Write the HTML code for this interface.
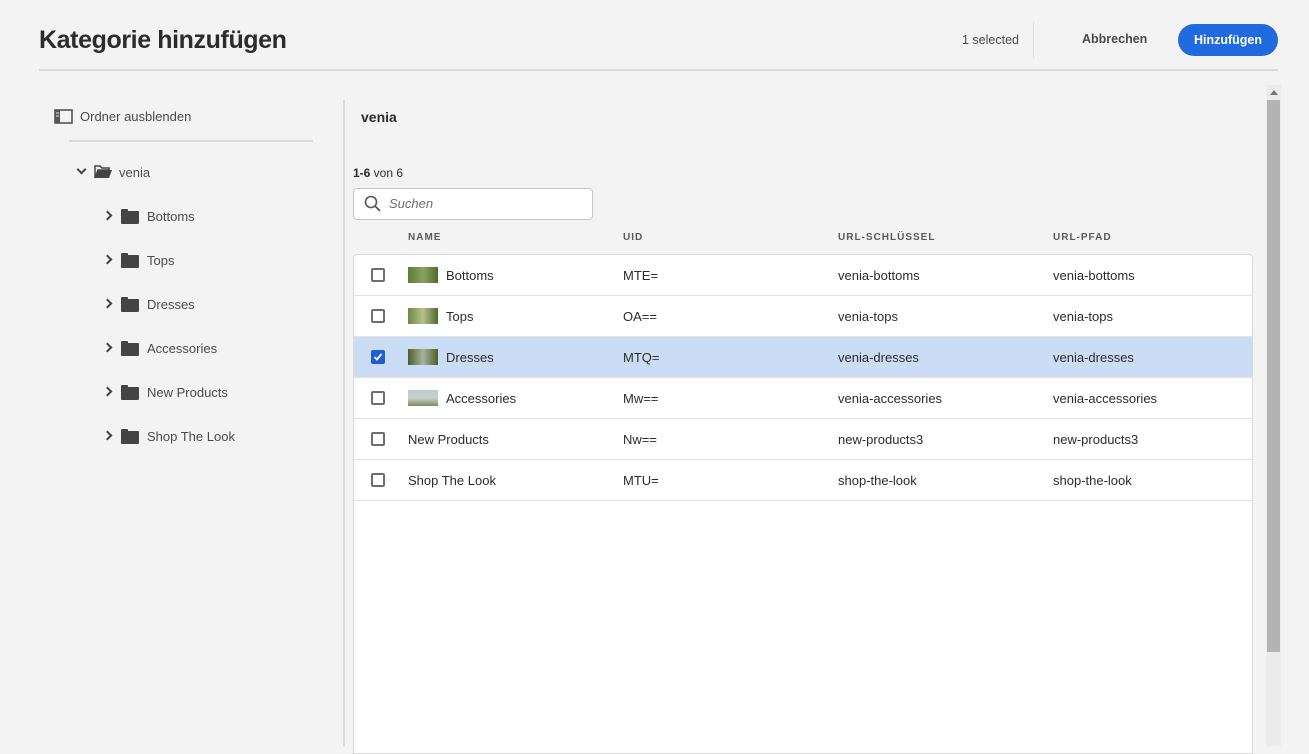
<!DOCTYPE html>
<html><head><meta charset="utf-8"><style>
*{box-sizing:border-box;margin:0;padding:0}
body{width:1309px;height:746px;overflow:hidden;background:#f3f3f3;font-family:"Liberation Sans",sans-serif;color:#2c2c2c;position:relative}
.abs{position:absolute}
h1{position:absolute;left:39px;top:26px;font-size:25px;font-weight:bold;color:#2c2c2c;letter-spacing:-0.4px}
.hr{position:absolute;left:39px;top:69px;width:1239px;height:2px;background:#dadada}
.sel{left:962px;top:33px;font-size:12.5px;color:#4b4b4b}
.vsep{left:1033px;top:22px;width:1px;height:36px;background:#dcdcdc}
.cancel{left:1082px;top:32px;font-size:12.5px;font-weight:bold;color:#4b4b4b}
.btn{left:1178px;top:24px;width:100px;height:32px;border-radius:16px;background:#1f6adf;color:#fff;font-size:12.5px;font-weight:bold;text-align:center;line-height:32px}
.side-sep{left:343px;top:100px;width:2px;height:646px;background:#dadada}
.item{position:absolute;font-size:13px;color:#4b4b4b}
.chev{position:absolute;width:7px;height:7px;border-right:2px solid #444;border-bottom:2px solid #444}
.folder{position:absolute;width:18px;height:13px;background:#444;border-radius:1px}
.folder:before{content:"";position:absolute;left:0;top:-2px;width:7px;height:3px;background:#444;border-radius:1px 1px 0 0}
.table{left:353px;top:254px;width:900px;height:500px;background:#fff;border:1px solid #dadada;border-radius:4px 4px 0 0}
.row{position:absolute;left:0;width:898px;height:41px;border-bottom:1px solid #e1e1e1;font-size:13px;color:#2c2c2c}
.row span{position:absolute;top:13px}
.cb{position:absolute;left:17px;top:13px;width:14px;height:14px;border:2px solid #6e6e6e;border-radius:2px;background:#fff}
.th{position:absolute;top:232px;font-size:10px;font-weight:bold;letter-spacing:1px;color:#5a5a5a}
.thumb{position:absolute;left:54px;top:12px;width:30px;height:16px}
</style></head><body>
<h1>Kategorie hinzufügen</h1>
<div class="abs sel">1 selected</div>
<div class="abs vsep"></div>
<div class="abs cancel">Abbrechen</div>
<div class="abs btn">Hinzufügen</div>
<div class="hr"></div>

<svg class="abs" style="left:54px;top:109px" width="19" height="15" viewBox="0 0 19 15"><rect x="1" y="1" width="17" height="13" fill="none" stroke="#555" stroke-width="1.6"/><rect x="1" y="1" width="5" height="13" fill="#555"/><rect x="2" y="3.5" width="3" height="1" fill="#eee"/><rect x="2" y="6.5" width="3" height="1" fill="#eee"/></svg>
<div class="item" style="left:80px;top:109px">Ordner ausblenden</div>
<div class="abs" style="left:69px;top:140px;width:244px;height:2px;background:#dadada"></div>

<div class="chev" style="left:78px;top:166px;transform:rotate(45deg)"></div>
<svg class="abs" style="left:94px;top:165px" width="18" height="14" viewBox="0 0 18 14"><path d="M1 1h5l2 2h7v2H4L1 13z" fill="none" stroke="#444" stroke-width="1.5"/><path d="M4 5h14l-3 8H1z" fill="#444"/></svg>
<div class="item" style="left:119px;top:165px">venia</div>

<div class="chev" style="left:104px;top:212px;transform:rotate(-45deg)"></div><div class="folder" style="left:121px;top:211px"></div><div class="item" style="left:147px;top:209px">Bottoms</div>
<div class="chev" style="left:104px;top:256px;transform:rotate(-45deg)"></div><div class="folder" style="left:121px;top:255px"></div><div class="item" style="left:147px;top:253px">Tops</div>
<div class="chev" style="left:104px;top:300px;transform:rotate(-45deg)"></div><div class="folder" style="left:121px;top:299px"></div><div class="item" style="left:147px;top:297px">Dresses</div>
<div class="chev" style="left:104px;top:344px;transform:rotate(-45deg)"></div><div class="folder" style="left:121px;top:343px"></div><div class="item" style="left:147px;top:341px">Accessories</div>
<div class="chev" style="left:104px;top:388px;transform:rotate(-45deg)"></div><div class="folder" style="left:121px;top:387px"></div><div class="item" style="left:147px;top:385px">New Products</div>
<div class="chev" style="left:104px;top:432px;transform:rotate(-45deg)"></div><div class="folder" style="left:121px;top:431px"></div><div class="item" style="left:147px;top:429px">Shop The Look</div>

<div class="side-sep abs"></div>

<div class="abs" style="left:361px;top:109px;font-size:14px;font-weight:bold;color:#2c2c2c">venia</div>
<div class="abs" style="left:353px;top:166px;font-size:12px;color:#2c2c2c"><b>1-6</b> von 6</div>
<div class="abs" style="left:353px;top:188px;width:240px;height:32px;border:1px solid #c8c8c8;border-radius:4px;background:#fff"></div>
<svg class="abs" style="left:364px;top:195px" width="18" height="18" viewBox="0 0 18 18"><circle cx="7" cy="7" r="5.5" fill="none" stroke="#555" stroke-width="1.6"/><path d="M11 11l5 5" stroke="#555" stroke-width="1.8"/></svg>
<div class="abs" style="left:389px;top:196px;font-size:13px;font-style:italic;color:#6e6e6e">Suchen</div>

<div class="th" style="left:408px">NAME</div>
<div class="th" style="left:623px">UID</div>
<div class="th" style="left:838px">URL-SCHLÜSSEL</div>
<div class="th" style="left:1053px">URL-PFAD</div>

<div class="abs table">
<div class="row" style="top:0"><div class="cb"></div><div class="thumb" style="background:linear-gradient(90deg,#5d7a3a,#8aa35e 50%,#4e6a30)"></div><span style="left:92px">Bottoms</span><span style="left:269px">MTE=</span><span style="left:484px">venia-bottoms</span><span style="left:699px">venia-bottoms</span></div>
<div class="row" style="top:41px"><div class="cb"></div><div class="thumb" style="background:linear-gradient(90deg,#6f8a45,#b7c08a 50%,#4e6a30)"></div><span style="left:92px">Tops</span><span style="left:269px">OA==</span><span style="left:484px">venia-tops</span><span style="left:699px">venia-tops</span></div>
<div class="row" style="top:82px;background:#cbddf5"><div class="cb" style="background:#1f5fd1;border-color:#1f5fd1"><svg width="10" height="10" viewBox="0 0 10 10" style="position:absolute;left:0;top:0"><path d="M1.5 5l2.5 2.5 4.5-5.5" fill="none" stroke="#fff" stroke-width="1.8"/></svg></div><div class="thumb" style="background:linear-gradient(90deg,#4a5e2c,#a6b29a 50%,#4a5e2c)"></div><span style="left:92px">Dresses</span><span style="left:269px">MTQ=</span><span style="left:484px">venia-dresses</span><span style="left:699px">venia-dresses</span></div>
<div class="row" style="top:123px"><div class="cb"></div><div class="thumb" style="background:linear-gradient(180deg,#b8c8d6,#c8d0c8 50%,#7d8c60)"></div><span style="left:92px">Accessories</span><span style="left:269px">Mw==</span><span style="left:484px">venia-accessories</span><span style="left:699px">venia-accessories</span></div>
<div class="row" style="top:164px"><div class="cb"></div><span style="left:54px">New Products</span><span style="left:269px">Nw==</span><span style="left:484px">new-products3</span><span style="left:699px">new-products3</span></div>
<div class="row" style="top:205px"><div class="cb"></div><span style="left:54px">Shop The Look</span><span style="left:269px">MTU=</span><span style="left:484px">shop-the-look</span><span style="left:699px">shop-the-look</span></div>
</div>

<div class="abs" style="left:1266px;top:85px;width:15px;height:661px;background:#ebebeb"></div>
<div class="abs" style="left:1270px;top:90px;width:0;height:0;border-left:4px solid transparent;border-right:4px solid transparent;border-bottom:5px solid #777"></div>
<div class="abs" style="left:1267px;top:100px;width:13px;height:552px;background:#b3b3b3"></div>
</body></html>
